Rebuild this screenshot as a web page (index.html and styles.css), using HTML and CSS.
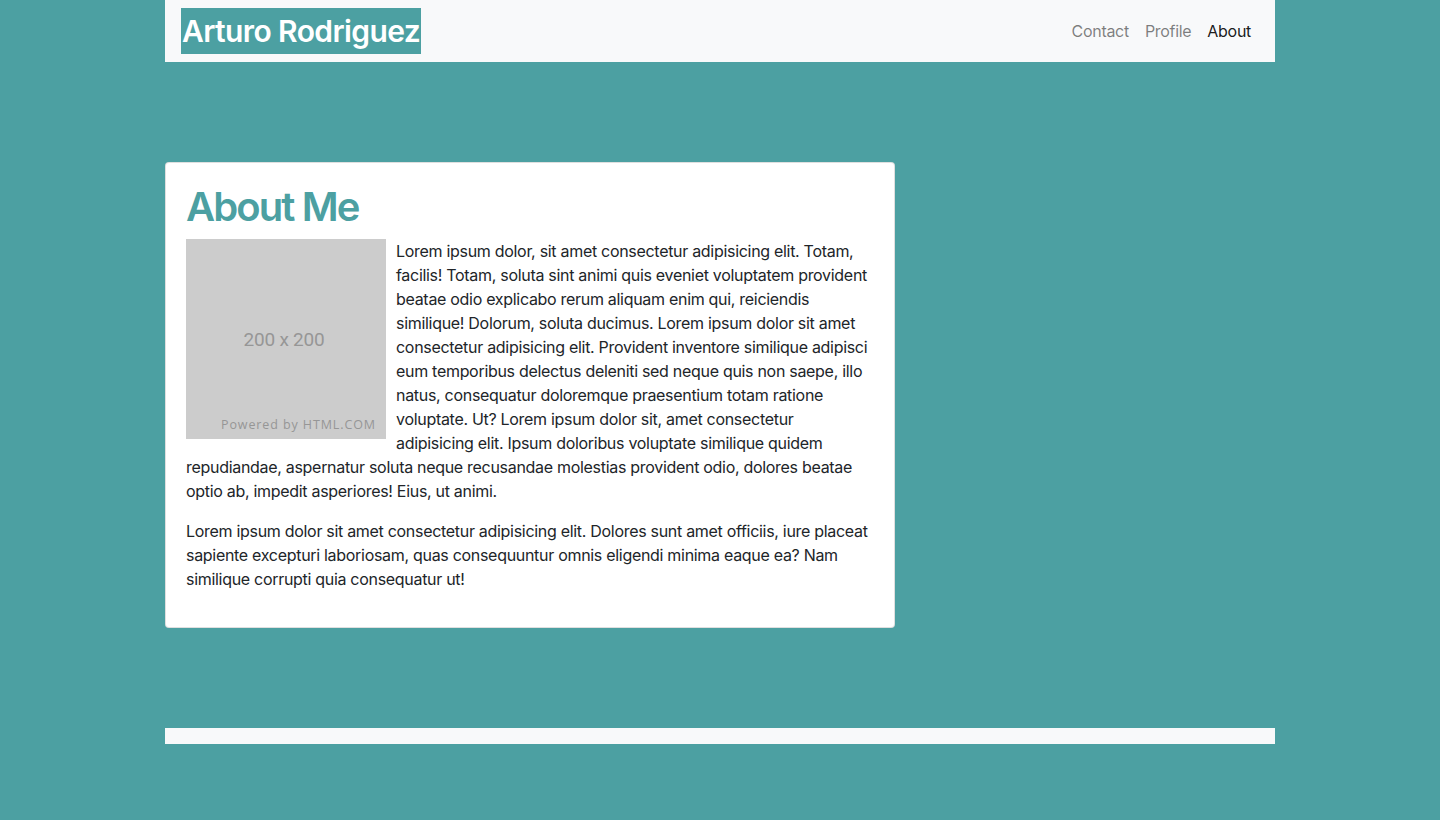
FILE: index.html
```html
<!DOCTYPE html>
<html lang="en">
<head>
<meta charset="utf-8">
<title>Arturo Rodriguez</title>
<link rel="stylesheet" href="styles.css">
</head>
<body>
<div class="container">
  <nav class="navbar">
    <a class="brand" href="#">Arturo Rodriguez</a>
    <ul class="nav">
      <li><a class="nav-link" href="#">Contact</a></li>
      <li><a class="nav-link" href="#">Profile</a></li>
      <li><a class="nav-link active" href="#">About</a></li>
    </ul>
  </nav>
  <main class="main">
    <section class="card">
      <h1 class="title">About Me</h1>
      <div class="placeholder">
        <span class="ph-size">200 x 200</span>
        <span class="ph-powered">Powered by HTML.COM</span>
      </div>
      <p>Lorem ipsum dolor, sit amet consectetur adipisicing elit. Totam, facilis! Totam, soluta sint animi quis eveniet voluptatem provident beatae odio explicabo rerum aliquam enim qui, reiciendis similique! Dolorum, soluta ducimus. Lorem ipsum dolor sit amet consectetur adipisicing elit. Provident inventore similique adipisci eum temporibus delectus deleniti sed neque quis non saepe, illo natus, consequatur doloremque praesentium totam ratione voluptate. Ut? Lorem ipsum dolor sit, amet consectetur adipisicing elit. Ipsum doloribus voluptate similique quidem repudiandae, aspernatur soluta neque recusandae molestias provident odio, dolores beatae optio ab, impedit asperiores! Eius, ut animi.</p>
      <p>Lorem ipsum dolor sit amet consectetur adipisicing elit. Dolores sunt amet officiis, iure placeat sapiente excepturi laboriosam, quas consequuntur omnis eligendi minima eaque ea? Nam similique corrupti quia consequatur ut!</p>
    </section>
  </main>
  <footer class="footer"></footer>
</div>
</body>
</html>
```

FILE: styles.css
```css
* { box-sizing: border-box; }
html, body { margin: 0; padding: 0; }
body {
  background: #4ca0a2;
  font-family: Inter, "Noto Sans", sans-serif;
  font-size: 16px;
  line-height: 24px;
  color: #212529;
  letter-spacing: -0.3px;
}
.container {
  width: 1110px;
  margin: 0 auto;
}
.navbar {
  background: #f8f9fa;
  display: flex;
  align-items: center;
  justify-content: space-between;
  padding: 8px 16px;
  height: 62px;
}
.brand {
  display: block;
  background: #4ca0a2;
  color: #fff;
  font-size: 30px;
  line-height: 36px;
  font-weight: 600;
  padding: 5px 1px;
  text-decoration: none;
  letter-spacing: -0.6px;
}
.nav {
  display: flex;
  list-style: none;
  margin: 0;
  padding: 0;
}
.nav-link {
  display: block;
  padding: 8px;
  color: rgba(0, 0, 0, 0.5);
  text-decoration: none;
  font-size: 16px;
  line-height: 24px;
}
.nav-link.active { color: rgba(0, 0, 0, 0.9); }
.main {
  padding: 100px 0;
}
.card {
  width: 730px;
  background: #fff;
  border: 1px solid rgba(0, 0, 0, 0.125);
  border-radius: 4px;
  padding: 20px;
  overflow: hidden;
}
.title {
  margin: 0 0 8px;
  font-size: 40px;
  line-height: 48px;
  font-weight: 600;
  color: #4ca0a2;
  letter-spacing: -1.9px;
}
.placeholder {
  float: left;
  width: 200px;
  height: 200px;
  background: #cccccc;
  margin-right: 10px;
  display: grid;
  grid-template-rows: 1fr auto 1fr;
  letter-spacing: 0;
}
.ph-size {
  grid-row: 2;
  justify-self: center;
  margin: 2px 0 0 -4px;
  font-family: "Roboto", sans-serif;
  font-size: 19px;
  line-height: 22px;
  color: #969696;
  letter-spacing: -0.2px;
}
.ph-powered {
  grid-row: 3;
  align-self: end;
  justify-self: end;
  margin: 0 10px 6px 0;
  font-family: "Open Sans", sans-serif;
  font-size: 12.5px;
  line-height: 16px;
  color: #969696;
  letter-spacing: 0.9px;
}
p {
  margin: 0 0 16px;
}
.footer {
  background: #f8f9fa;
  height: 16px;
}
```
